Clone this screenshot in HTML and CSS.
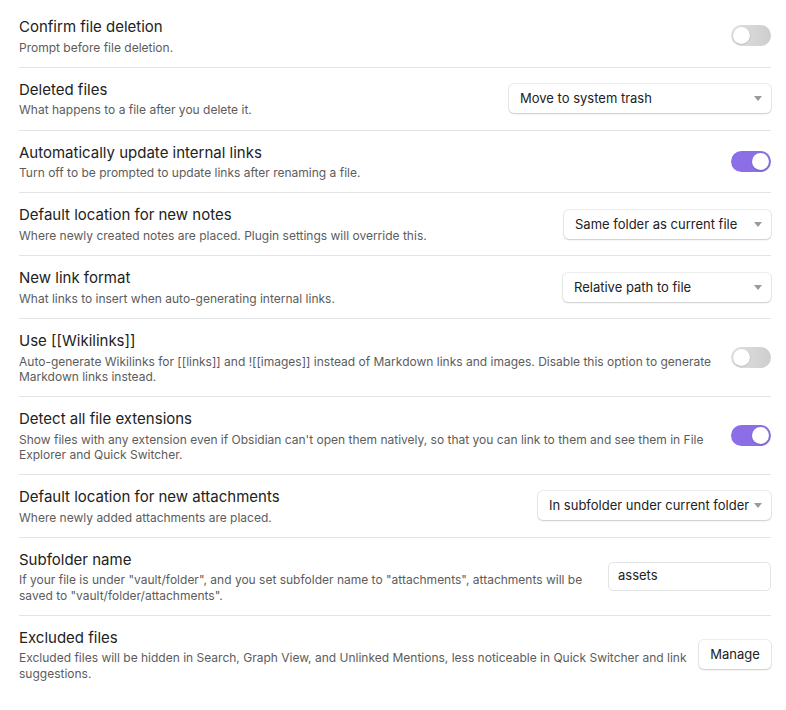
FILE: index.html
```html
<!DOCTYPE html>
<html>
<head>
<meta charset="utf-8">
<link rel="stylesheet" href="styles.css">
</head>
<body>
<div class="settings">
  <div class="item">
    <div class="info">
      <div class="name">Confirm file deletion</div>
      <div class="desc">Prompt before file deletion.</div>
    </div>
    <div class="control"><div class="toggle"><span class="knob"></span></div></div>
  </div>
  <div class="item">
    <div class="info">
      <div class="name">Deleted files</div>
      <div class="desc">What happens to a file after you delete it.</div>
    </div>
    <div class="control"><div class="dropdown w-trash">Move to system trash<svg class="caret" width="8" height="5" viewBox="0 0 8 5"><polygon points="0,0 8,0 4,5" fill="#9a9a9a"/></svg></div></div>
  </div>
  <div class="item">
    <div class="info">
      <div class="name">Automatically update internal links</div>
      <div class="desc">Turn off to be prompted to update links after renaming a file.</div>
    </div>
    <div class="control"><div class="toggle on"><span class="knob"></span></div></div>
  </div>
  <div class="item">
    <div class="info">
      <div class="name">Default location for new notes</div>
      <div class="desc">Where newly created notes are placed. Plugin settings will override this.</div>
    </div>
    <div class="control"><div class="dropdown w-notes">Same folder as current file<svg class="caret" width="8" height="5" viewBox="0 0 8 5"><polygon points="0,0 8,0 4,5" fill="#9a9a9a"/></svg></div></div>
  </div>
  <div class="item">
    <div class="info">
      <div class="name">New link format</div>
      <div class="desc">What links to insert when auto-generating internal links.</div>
    </div>
    <div class="control"><div class="dropdown w-link">Relative path to file<svg class="caret" width="8" height="5" viewBox="0 0 8 5"><polygon points="0,0 8,0 4,5" fill="#9a9a9a"/></svg></div></div>
  </div>
  <div class="item">
    <div class="info">
      <div class="name">Use [[Wikilinks]]</div>
      <div class="desc">Auto-generate Wikilinks for [[links]] and ![[images]] instead of Markdown links and images. Disable this option to generate Markdown links instead.</div>
    </div>
    <div class="control"><div class="toggle"><span class="knob"></span></div></div>
  </div>
  <div class="item">
    <div class="info">
      <div class="name">Detect all file extensions</div>
      <div class="desc">Show files with any extension even if Obsidian can't open them natively, so that you can link to them and see them in File Explorer and Quick Switcher.</div>
    </div>
    <div class="control"><div class="toggle on"><span class="knob"></span></div></div>
  </div>
  <div class="item">
    <div class="info">
      <div class="name">Default location for new attachments</div>
      <div class="desc">Where newly added attachments are placed.</div>
    </div>
    <div class="control"><div class="dropdown w-attach">In subfolder under current folder<svg class="caret" width="8" height="5" viewBox="0 0 8 5"><polygon points="0,0 8,0 4,5" fill="#9a9a9a"/></svg></div></div>
  </div>
  <div class="item">
    <div class="info">
      <div class="name">Subfolder name</div>
      <div class="desc">If your file is under "vault/folder", and you set subfolder name to "attachments", attachments will be saved to "vault/folder/attachments".</div>
    </div>
    <div class="control"><div class="textinput">assets</div></div>
  </div>
  <div class="item">
    <div class="info">
      <div class="name">Excluded files</div>
      <div class="desc">Excluded files will be hidden in Search, Graph View, and Unlinked Mentions, less noticeable in Quick Switcher and link suggestions.</div>
    </div>
    <div class="control"><div class="button">Manage</div></div>
  </div>
</div>
</body>
</html>
```
FILE: styles.css
```css
html, body {
  margin: 0;
  padding: 0;
  background: #ffffff;
}
body {
  font-family: Inter, "Noto Sans", "Liberation Sans", sans-serif;
  color: #222222;
}
.settings {
  width: 752px;
  padding: 5px 15px 0 19px;
}
.item {
  display: flex;
  align-items: center;
  padding: 12px 0;
  border-top: 1px solid #e3e3e3;
}
.item:first-child {
  border-top: none;
}
.info {
  flex: 1 1 auto;
  margin-right: 12px;
}
.name {
  font-size: 15px;
  line-height: 20.6px;
  color: #222222;
}
.desc {
  font-size: 12px;
  line-height: 15.2px;
  padding-top: 2px;
  color: #5c5c5c;
}
.control {
  flex: 0 0 auto;
  display: flex;
  justify-content: flex-end;
}
.toggle {
  width: 40px;
  height: 21px;
  border-radius: 11px;
  background: linear-gradient(to right, #e2e2e2, #cdcdcd);
  position: relative;
}
.toggle .knob {
  position: absolute;
  top: 2px;
  left: 2px;
  width: 17px;
  height: 17px;
  border-radius: 50%;
  background: #ffffff;
  box-shadow: 0 0.5px 1.5px rgba(0,0,0,0.25);
}
.toggle.on {
  background: #8c6fe6;
}
.toggle.on .knob {
  left: 21px;
}
.dropdown {
  position: relative;
  height: 29px;
  line-height: 29px;
  box-sizing: border-box;
  padding: 0 28px 0 11px;
  font-size: 13px;
  color: #222222;
  background: #ffffff;
  border-radius: 5px;
  box-shadow: 0 0 0 1px rgba(0,0,0,0.07), 0 1px 2px rgba(0,0,0,0.14);
  white-space: nowrap;
}
.dropdown .caret {
  position: absolute;
  right: 9px;
  top: 12px;
}
.w-trash { width: 262px; }
.w-notes { width: 207px; }
.w-link { width: 208px; }
.w-attach { width: 233px; }
.textinput {
  width: 163px;
  height: 29px;
  box-sizing: border-box;
  border: 1px solid #e3e3e3;
  border-radius: 5px;
  padding: 0 9px;
  line-height: 25px;
  font-size: 13px;
  color: #222222;
}
.button {
  width: 72px;
  height: 29px;
  box-sizing: border-box;
  line-height: 29px;
  text-align: center;
  font-size: 13px;
  color: #222222;
  background: #ffffff;
  border-radius: 5px;
  box-shadow: 0 0 0 1px rgba(0,0,0,0.07), 0 1px 2px rgba(0,0,0,0.14);
}
```
